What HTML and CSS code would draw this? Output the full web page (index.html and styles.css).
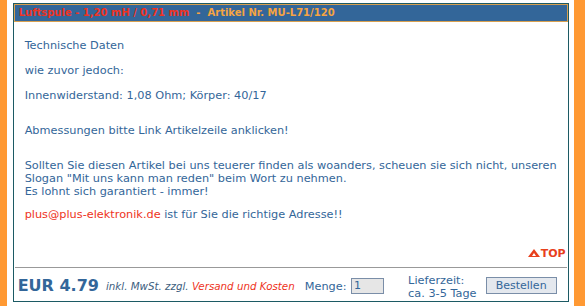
FILE: index.html
```html
<!DOCTYPE html>
<html lang="de">
<head>
  <meta charset="UTF-8" />
  <title>Luftspule - 1,20 mH / 0,71 mm</title>
  <link rel="stylesheet" href="styles.css">
</head>
<body>
  <div class="side side-left"></div>

  <div class="article-box">
    <div class="article-head">
      <span class="title">Luftspule - 1,20 mH / 0,71 mm</span>
      <span class="art-nr">&nbsp;-&nbsp; Artikel Nr. MU-L71/120</span>
    </div>

    <div class="article-body">
      <p>Technische Daten</p>
      <p>wie zuvor jedoch:</p>
      <p>Innenwiderstand: 1,08 Ohm; Körper: 40/17</p>
      <p class="spaced">Abmessungen bitte Link Artikelzeile anklicken!</p>
      <p class="spaced">
        Sollten Sie diesen Artikel bei uns teuerer finden als woanders, scheuen sie sich nicht, unseren<br />
        Slogan "Mit uns kann man reden" beim Wort zu nehmen.<br />
        Es lohnt sich garantiert - immer!
      </p>
      <p class="contact"><a href="#" class="mail">plus@plus-elektronik.de</a> ist für Sie die richtige Adresse!!</p>
    </div>

    <div class="top-link">
      <a href="#">
        <svg width="12" height="8" viewBox="0 0 12 8"><polygon points="6,0 12,8 0,8" fill="#e8401c"/><polygon points="6,4 8,7 4,7" fill="#fff"/></svg>TOP
      </a>
    </div>

    <div class="order-row">
      <span class="price">EUR 4.79</span>
      <span class="tax">inkl. MwSt. zzgl. <a href="#">Versand und Kosten</a></span>
      <label class="qty">Menge: <input type="text" value="1" /></label>
      <span class="delivery">Lieferzeit:<br />ca. 3-5 Tage</span>
      <button type="button">Bestellen</button>
    </div>
  </div>

  <div class="side side-right"></div>
</body>
</html>
```

FILE: styles.css
```css
body {
  margin: 0;
  height: 306px;
  display: flex;
  background: white;
  font-family: "DejaVu Sans", Verdana, sans-serif;
  font-size: 11.3px;
  color: #336699;
}

.side {
  background: #ff9933;
}

.side-left {
  width: 7px;
  margin-right: 6px;
}

.side-right {
  width: 12px;
  margin-left: 5px;
}

.article-box {
  flex: 1;
  margin-top: 3px;
  height: 299px;
  border: 1px solid #1c5a64;
  box-sizing: border-box;
  display: flex;
  flex-direction: column;
}

.article-head {
  height: 18px;
  background: #336699;
  border: 1px solid #d8a050;
  box-sizing: border-box;
  padding-left: 4px;
  font-size: 10px;
  font-weight: bold;
  line-height: 16px;
}

.article-head .title {
  color: #ee3322;
}

.article-head .art-nr {
  color: #f5a442;
}

.article-body {
  padding: 5px 11px 0;
  flex: 1;
  white-space: nowrap;
}

.article-body p {
  margin: 12px 0 0;
  line-height: 13px;
}

.article-body p.spaced {
  margin-top: 22px;
}

.article-body p.contact {
  margin-top: 10px;
}

.mail {
  color: #ee3322;
  text-decoration: none;
}

.top-link {
  text-align: right;
  padding: 0 2px 7px 0;
}

.top-link a {
  color: #e8401c;
  font-weight: bold;
  font-size: 11px;
  text-decoration: none;
}

.top-link svg {
  margin-right: 1px;
}

.order-row {
  margin: 0 1px;
  border-top: 1px solid #999;
  height: 34px;
  display: flex;
  align-items: center;
  padding: 2px 0 0 3px;
  box-sizing: border-box;
}

.price {
  font-size: 16px;
  font-weight: bold;
  margin-right: 7px;
}

.tax {
  font-size: 10.3px;
  font-style: italic;
  color: #406080;
}

.tax a {
  color: #ee3322;
  text-decoration: none;
}

.qty {
  margin-left: 10px;
}

.qty input {
  width: 33px;
  height: 16px;
  box-sizing: border-box;
  margin-left: 1px;
  border: 1px solid #7a8ea8;
  background: #e6e6e6;
  font: 11px "DejaVu Sans", sans-serif;
  color: #336699;
  padding: 0 2px;
}

.delivery {
  margin-left: 24px;
  padding-top: 2px;
  line-height: 13px;
}

button {
  margin: 0 10px 0 auto;
  width: 71px;
  height: 17px;
  border: 1px solid #7a8ea8;
  background: #e4e8ee;
  color: #336699;
  font: 11px "DejaVu Sans", sans-serif;
  padding: 0;
}
```
